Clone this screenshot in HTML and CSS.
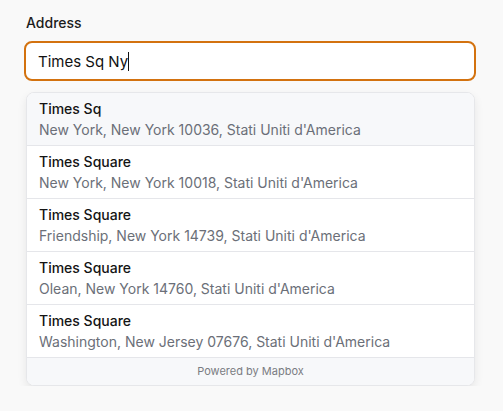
FILE: index.html
```html
<!DOCTYPE html>
<html>
<head>
<meta charset="utf-8">
<link rel="stylesheet" href="styles.css">
</head>
<body>
<div class="field">
  <label class="label">Address</label>
  <div class="input"><span class="value">Times Sq Ny</span><span class="caret"></span></div>
  <div class="menu">
    <div class="item active">
      <div class="title">Times Sq</div>
      <div class="sub">New York, New York 10036, Stati Uniti d'America</div>
    </div>
    <div class="item">
      <div class="title">Times Square</div>
      <div class="sub">New York, New York 10018, Stati Uniti d'America</div>
    </div>
    <div class="item">
      <div class="title">Times Square</div>
      <div class="sub">Friendship, New York 14739, Stati Uniti d'America</div>
    </div>
    <div class="item">
      <div class="title">Times Square</div>
      <div class="sub">Olean, New York 14760, Stati Uniti d'America</div>
    </div>
    <div class="item">
      <div class="title">Times Square</div>
      <div class="sub">Washington, New Jersey 07676, Stati Uniti d'America</div>
    </div>
    <div class="footer">Powered by Mapbox</div>
  </div>
</div>
</body>
</html>
```
FILE: styles.css
```css
html, body {
  margin: 0;
  padding: 0;
  background: #f9f9f9;
  font-family: Inter, "Noto Sans", sans-serif;
}
.field {
  padding: 13px 27px 0 24px;
  display: flex;
  flex-direction: column;
}
.label {
  font-size: 14px;
  font-weight: 500;
  color: #1c1c1c;
  line-height: 20px;
  padding-left: 2px;
  margin-bottom: 8px;
}
.input {
  height: 40px;
  box-sizing: border-box;
  border: 2px solid #d3720f;
  border-radius: 8px;
  background: #fff;
  display: flex;
  align-items: center;
  padding-left: 12px;
  font-size: 15px;
  color: #111;
}
.caret {
  display: inline-block;
  width: 1px;
  height: 19px;
  background: #111;
}
.menu {
  margin: 11px 1px 0 2px;
  background: #fff;
  border: 1px solid #e6e7ea;
  border-radius: 8px;
  overflow: hidden;
  box-shadow: 0 4px 10px rgba(0,0,0,0.08);
}
.item {
  padding: 5px 12px;
  border-bottom: 1px solid #e5e6ea;
}
.item.active {
  background: #f7f8fa;
}
.title {
  font-size: 14px;
  font-weight: 500;
  color: #141414;
  line-height: 21px;
}
.sub {
  font-size: 14px;
  color: #6b6f78;
  line-height: 21px;
}
.footer {
  background: #f7f8fa;
  text-align: center;
  font-size: 11px;
  color: #7a7c82;
  height: 27px;
  line-height: 27px;
}
```
